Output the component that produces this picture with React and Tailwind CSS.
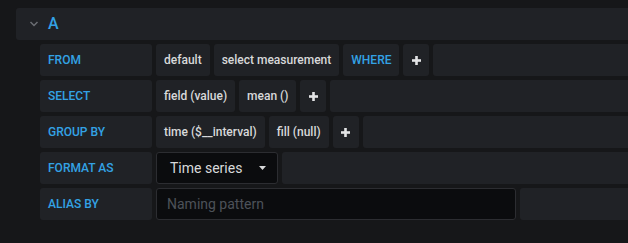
import React from "react";

const font = { fontFamily: "Roboto, 'Liberation Sans', sans-serif" };

function Plus() {
  return (
    <svg width="9" height="9" viewBox="0 0 9 9">
      <rect x="3.2" y="0" width="2.6" height="9" fill="#e3e4e5" />
      <rect x="0" y="3.2" width="9" height="2.6" fill="#e3e4e5" />
    </svg>
  );
}

function Label({ children }) {
  return (
    <div className="w-[112px] shrink-0 h-8 flex items-center pl-2 rounded-[3px] bg-[#202226] text-[#33a2e5] text-[12px] font-medium">
      {children}
    </div>
  );
}

function Seg({ children, blue }) {
  return (
    <div
      className={
        "h-8 shrink-0 flex items-center px-2 rounded-[3px] bg-[#202226] text-[12px] font-medium " +
        (blue ? "text-[#33a2e5]" : "text-[#d8d9da]")
      }
    >
      {children}
    </div>
  );
}

function PlusSeg() {
  return (
    <div className="h-8 w-[26px] shrink-0 flex items-center justify-center rounded-[3px] bg-[#202226]">
      <Plus />
    </div>
  );
}

function Filler() {
  return <div className="h-8 flex-1 rounded-l-[3px] bg-[#202226]" />;
}

export default function App() {
  return (
    <div className="w-[628px] h-[243px] bg-[#161719] pt-2 pl-4 overflow-hidden" style={font}>
      <div className="h-8 bg-[#202226] rounded-l-[3px] flex items-center">
        <svg className="ml-[13px]" width="10" height="6" viewBox="0 0 10 6">
          <path d="M1.5 1 L5 4.5 L8.5 1" stroke="#6b6e73" strokeWidth="1.5" fill="none" />
        </svg>
        <span className="ml-[9px] text-[16px] font-medium text-[#33a2e5]">A</span>
      </div>
      <div className="pl-6 pt-1 flex flex-col gap-1">
        <div className="flex gap-1">
          <Label>FROM</Label>
          <Seg>default</Seg>
          <Seg>select measurement</Seg>
          <Seg blue>WHERE</Seg>
          <PlusSeg />
          <Filler />
        </div>
        <div className="flex gap-1">
          <Label>SELECT</Label>
          <Seg>field (value)</Seg>
          <Seg>mean ()</Seg>
          <PlusSeg />
          <Filler />
        </div>
        <div className="flex gap-1">
          <Label>GROUP BY</Label>
          <Seg>time ($__interval)</Seg>
          <Seg>fill (null)</Seg>
          <PlusSeg />
          <Filler />
        </div>
        <div className="flex gap-1">
          <Label>FORMAT AS</Label>
          <div className="h-8 w-[122px] shrink-0 flex items-center justify-between pl-[13px] pr-[11px] rounded-[3px] bg-[#0b0c0e] border border-[#2c2d31] text-[14px] text-[#d8d9da]">
            <span>Time series</span>
            <svg width="7" height="4" viewBox="0 0 7 4">
              <path d="M0 0 L7 0 L3.5 4 Z" fill="#d8d9da" />
            </svg>
          </div>
          <Filler />
        </div>
        <div className="flex gap-1">
          <Label>ALIAS BY</Label>
          <div className="h-8 w-[360px] shrink-0 flex items-center pl-[10px] rounded-[3px] bg-[#0b0c0e] border border-[#2c2d31] text-[14px] text-[#4d5259]">
            Naming pattern
          </div>
          <Filler />
        </div>
      </div>
    </div>
  );
}
